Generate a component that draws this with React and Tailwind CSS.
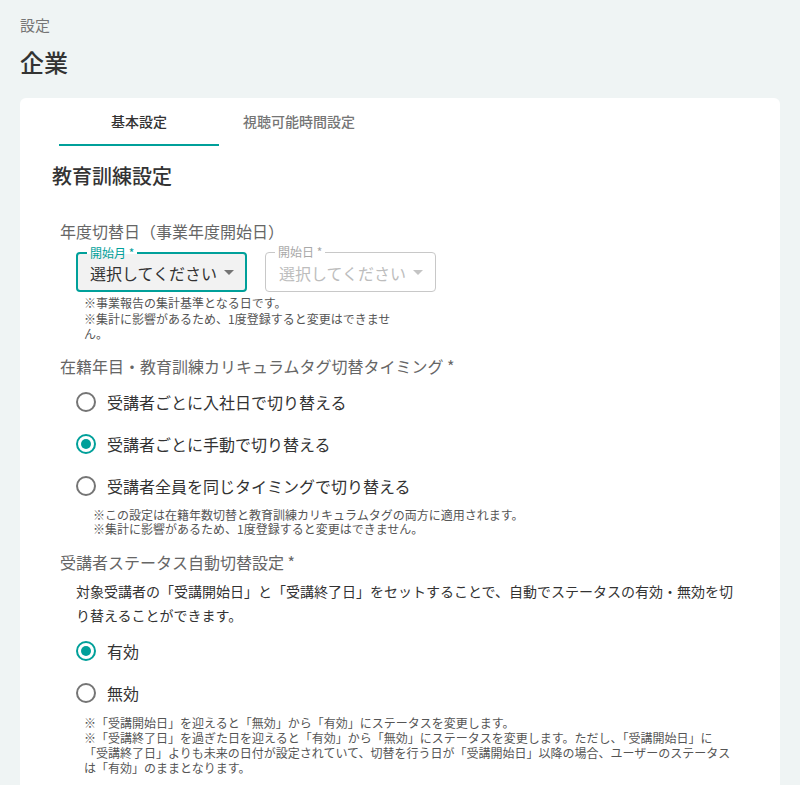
import React from "react";

function Radio({ checked, label }) {
  return (
    <div className="flex items-center h-[42px] pl-[56px]">
      <span
        className={
          "w-[20px] h-[20px] rounded-full border-2 flex items-center justify-center " +
          (checked ? "border-[#00a09a]" : "border-[#757575]")
        }
      >
        {checked && <span className="w-[10px] h-[10px] rounded-full bg-[#00a09a]" />}
      </span>
      <span className="ml-[11px] text-[16px] leading-6 text-[#333]">{label}</span>
    </div>
  );
}

function Select({ label, active }) {
  return (
    <div
      className={
        "relative w-[171px] h-[40px] rounded-[4px] flex items-center " +
        (active ? "border-2 border-[#00a09a] bg-[#f2f2f2] pl-[12px]" : "border border-[#c8c8c8] bg-white pl-[13px]")
      }
    >
      <span
        className={
          "absolute left-[9px] top-[-9px] px-[3px] text-[12px] leading-4 " +
          (active
            ? "text-[#00a09a] bg-[linear-gradient(to_bottom,white_55%,#f2f2f2_55%)]"
            : "text-[#a8a8a8] bg-white")
        }
      >
        {label}
      </span>
      <span className={"text-[16px] leading-6 mt-[1px] " + (active ? "text-[#333]" : "text-[#bdbdbd]")}>
        選択してください
      </span>
      <svg width="10" height="5" viewBox="0 0 10 5" className="ml-[7px] mt-[1px]">
        <path d="M0 0 L10 0 L5 5 Z" fill={active ? "#757575" : "#c4c4c4"} />
      </svg>
    </div>
  );
}

export default function App() {
  return (
    <div className="min-h-screen bg-[#eff4f4] px-5 pt-[15px] pb-10 font-['Noto_Sans_CJK_JP','Noto_Sans',sans-serif]">
      <div className="text-[15px] leading-5 text-[#757575]">設定</div>
      <h1 className="mt-[11px] text-[24px] leading-8 font-medium text-[#333]">企業</h1>
      <div className="mt-[20px] bg-white rounded-[6px] pb-10">
        <div className="flex pl-[39px]">
          <div className="w-[160px] h-[48px] flex items-center justify-center border-b-2 border-[#00a09a] text-[14px] font-medium text-[#333]">
            基本設定
          </div>
          <div className="w-[160px] h-[48px] flex items-center justify-center text-[14px] font-medium text-[#757575] pb-[2px]">
            視聴可能時間設定
          </div>
        </div>

        <h2 className="mt-[16px] pl-[32px] text-[20px] leading-7 font-medium text-[#333]">教育訓練設定</h2>

        <div className="mt-[29px] pl-[40px] text-[16px] leading-6 text-[#666]">年度切替日（事業年度開始日）</div>
        <div className="mt-[9px] pl-[56px] flex gap-[18px]">
          <Select label="開始月 *" active />
          <Select label="開始日 *" />
        </div>
        <div className="mt-[3px] pl-[64px] w-[374px] text-[12px] leading-[15.5px] text-[#555]">
          ※事業報告の集計基準となる日です。
          <br />
          ※集計に影響があるため、1度登録すると変更はできません。
        </div>

        <div className="mt-[12px] pl-[40px] text-[16px] leading-6 text-[#666]">
          在籍年目・教育訓練カリキュラムタグ切替タイミング *
        </div>
        <div className="mt-[3px]">
          <Radio label="受講者ごとに入社日で切り替える" />
          <Radio label="受講者ごとに手動で切り替える" checked />
          <Radio label="受講者全員を同じタイミングで切り替える" />
        </div>
        <div className="mt-[1px] pl-[73px] text-[12px] leading-[14.5px] text-[#555]">
          <div>※この設定は在籍年数切替と教育訓練カリキュラムタグの両方に適用されます。</div>
          <div>※集計に影響があるため、1度登録すると変更はできません。</div>
        </div>

        <div className="mt-[13px] pl-[40px] text-[16px] leading-6 text-[#666]">受講者ステータス自動切替設定 *</div>
        <div className="mt-[5px] ml-[56px] w-[664px] text-[14px] leading-6 text-[#333]">
          対象受講者の「受講開始日」と「受講終了日」をセットすることで、自動でステータスの有効・無効を切り替えることができます。
        </div>
        <div className="mt-[3px]">
          <Radio label="有効" checked />
          <Radio label="無効" />
        </div>
        <div className="mt-[1px] ml-[64px] w-[648px] text-[12px] leading-[15px] text-[#555]">
          <div>※「受講開始日」を迎えると「無効」から「有効」にステータスを変更します。</div>
          <div>
            ※「受講終了日」を過ぎた日を迎えると「有効」から「無効」にステータスを変更します。ただし、「受講開始日」に「受講終了日」よりも未来の日付が設定されていて、切替を行う日が「受講開始日」以降の場合、ユーザーのステータスは「有効」のままとなります。
          </div>
        </div>
      </div>
    </div>
  );
}
